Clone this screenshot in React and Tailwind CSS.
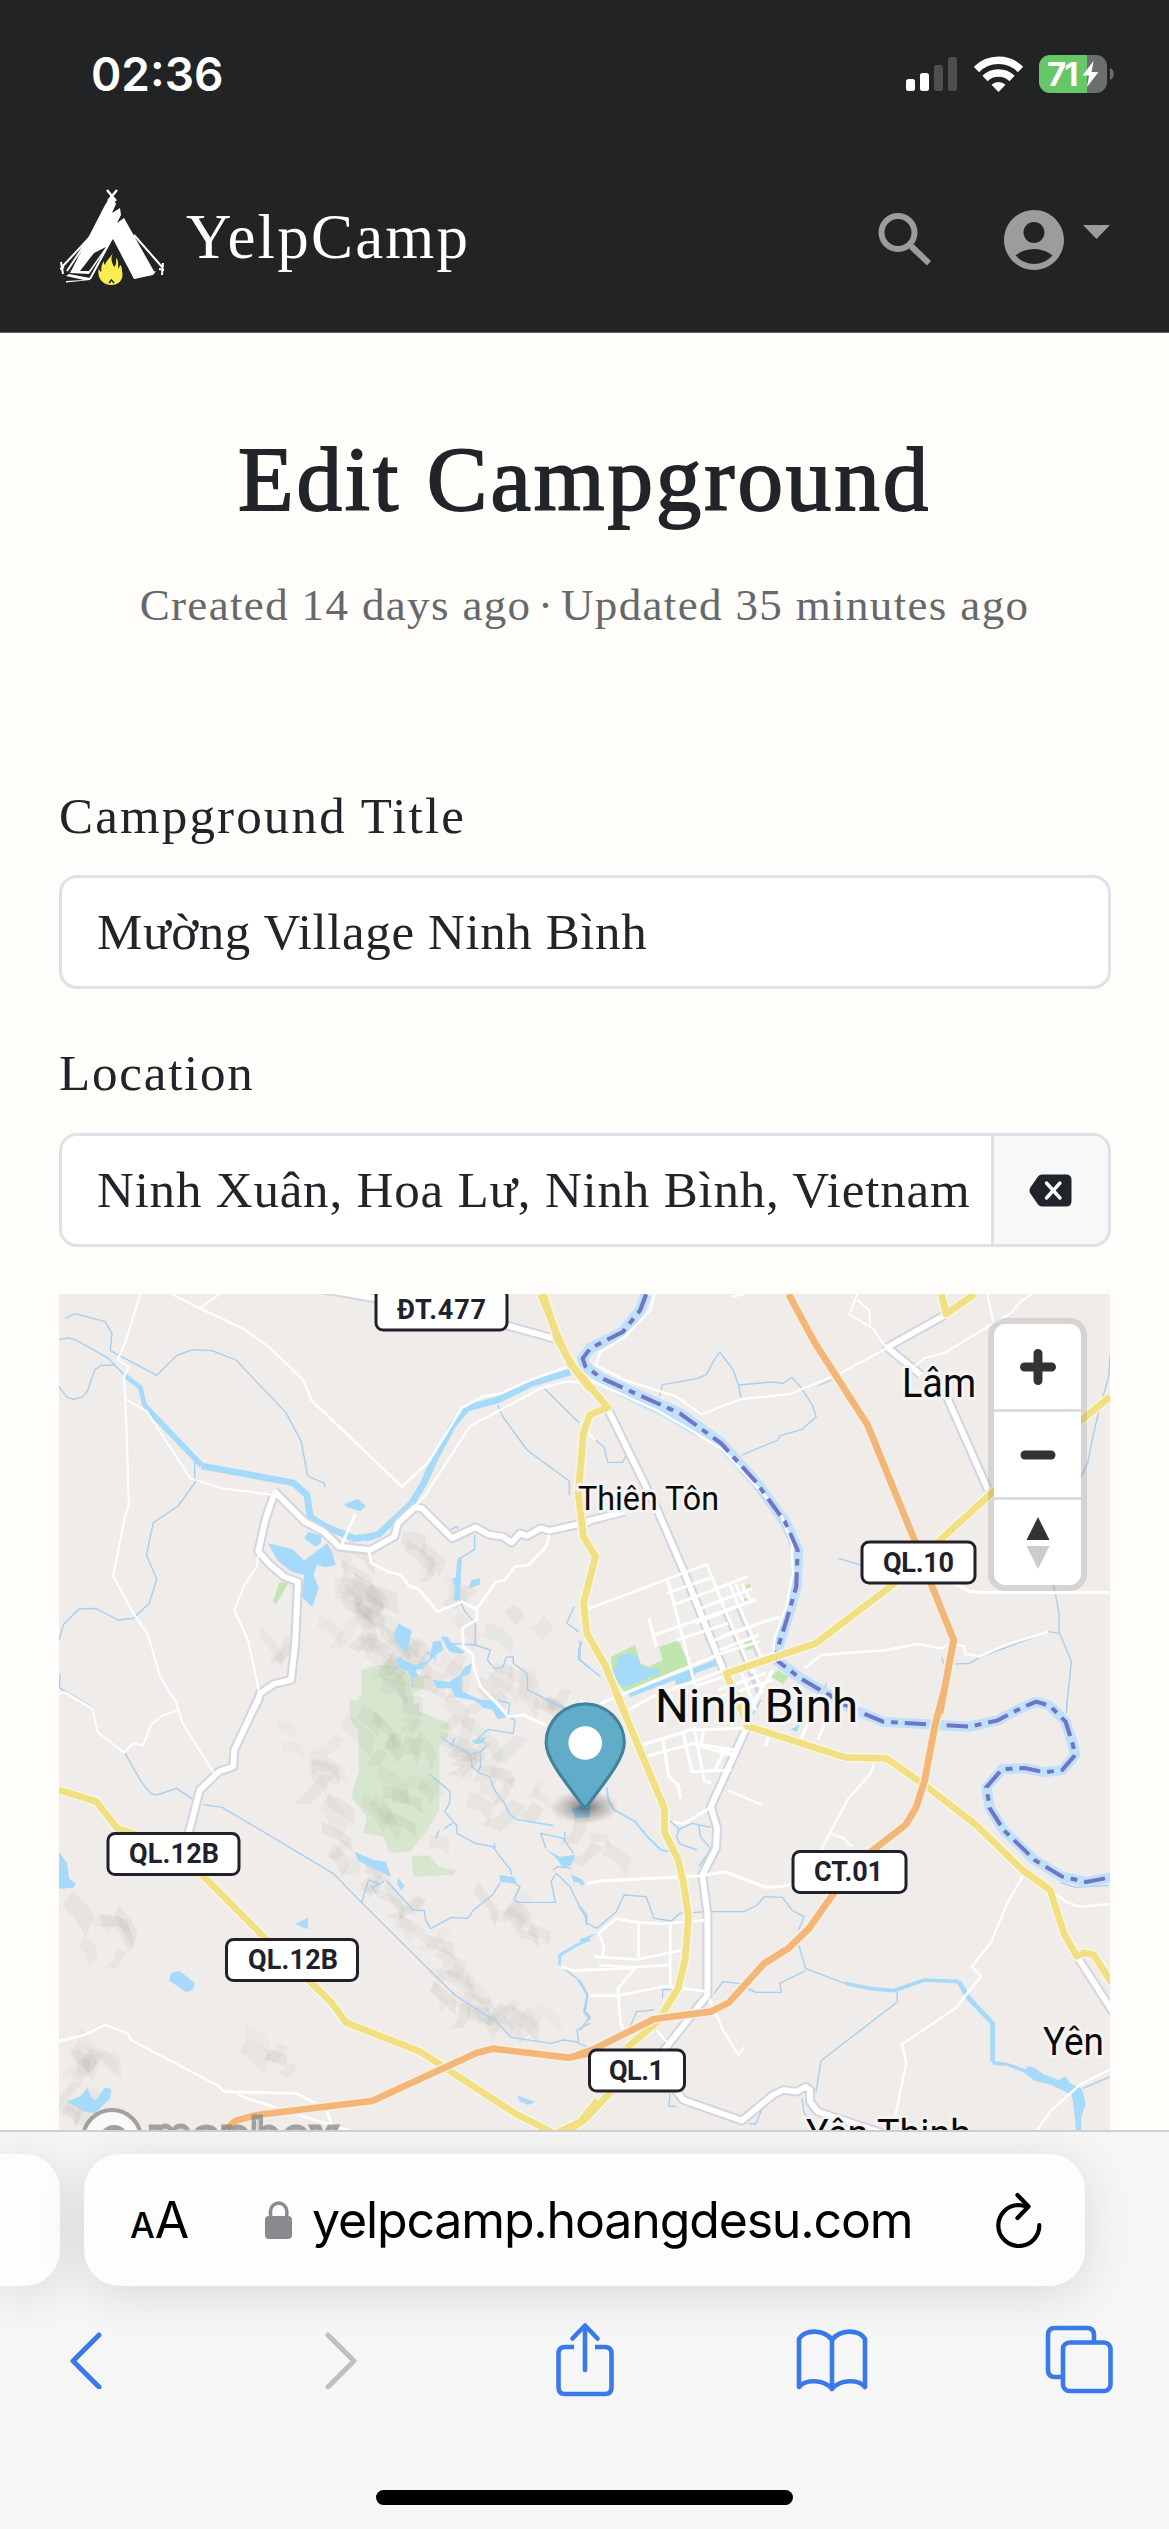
import React from "react";

/* ---------- Map data: four tiles, each with its own local coordinates ---------- */
const TILES = {
  nw: "translate(50 1280) scale(0.34439 0.33333)",
  ne: "translate(580 1280) scale(0.34439 0.33333)",
  sw: "translate(50 1700) scale(0.34439 0.33333)",
  se: "translate(580 1700) scale(0.34439 0.33333)",
};

const PARKS = {
  nw: [
    { d: "M666 908L694 905L657 972L647 967Z", c: "#bfe6af" },
    { d: "M905 1170L955 1155L1000 1158L1050 1185L1088 1190L1085 1225L1055 1240L1055 1300L870 1300L905 1240Z", c: "#d7e6cf" },
  ],
  ne: [
    { d: "M90 1130L160 1095L175 1150L200 1160L240 1140L230 1100L285 1082L318 1155L130 1235L95 1190Z", c: "#bfe6af" },
    { d: "M475 1082L497 1074L505 1104L482 1112Z", c: "#bfe6af" },
    { d: "M480 915L495 911L495 928L482 930Z", c: "#bfe6af" },
    { d: "M555 1190L575 1170L605 1190L590 1212Z", c: "#bfe6af" },
    { d: "M468 960L484 953L484 962L470 967Z", c: "#bfe6af" },
  ],
  sw: [
    { d: "M870 0L1050 0L1075 35L1160 70L1155 110L1130 140L1130 330L1090 400L1045 455L985 458L970 412L910 398L920 350L875 290L897 210L895 90L870 55Z", c: "#d7e6cf" },
    { d: "M1050 468L1100 466L1130 500L1180 510L1170 524L1055 530Z", c: "#d7e6cf" },
  ],
  se: [],
};

const WATER = {
  nw: [
    "M633 790L705 808L738 842L805 790L820 820L830 855L800 862L775 855L765 885L780 925L762 980L730 950L738 885L700 875L660 840Z",
    "M750 755L790 768L786 790L770 800L738 775Z",
    "M854 672L895 657L917 678L902 694L862 682Z",
    "M1012 1030L1050 1052L1035 1120L1012 1095L997 1065Z",
    "M1005 1130L1060 1155L1100 1140L1112 1085L1135 1082L1142 1110L1120 1125L1118 1158L1115 1130L1080 1165L1062 1170L1070 1190L1050 1195L1040 1175L1010 1160Z",
    "M1135 1070L1155 1070L1165 1088L1205 1115L1195 1122L1160 1115Z",
    "M1110 1200L1160 1205L1190 1185L1205 1160L1225 1150L1220 1180L1195 1190L1197 1235L1240 1255L1275 1270L1300 1280L1312 1290L1260 1285L1235 1262L1175 1250L1165 1225L1125 1225Z",
    "M1168 895L1190 890L1190 915L1172 915Z",
    "M1215 925L1225 900L1250 895L1247 915Z",
    "M1183 835L1196 830L1190 960L1172 962Z",
  ],
  ne: [
    "M100 1165L110 1130L140 1118L165 1128L180 1160L228 1168L232 1182L205 1190L160 1210L125 1222L97 1195Z",
    "M140 1240L390 1140L400 1155L335 1180L330 1200L280 1215L275 1200L145 1252Z",
  ],
  sw: [
    "M1238 0L1290 0L1330 50L1300 58L1285 30Z",
    "M1225 122L1265 110L1260 128L1235 133Z",
    "M26 455L50 490L55 535L75 552L68 563L26 566Z",
    "M884 455L940 480L975 485L990 530L968 520L895 482Z",
    "M1012 535L1030 558L1020 572L1008 552Z",
    "M712 672L750 653L748 688Z",
    "M350 820L375 812L420 848L415 870L395 876L347 842Z",
    "M47 1205L90 1188L110 1162L118 1190L132 1202L160 1162L178 1168L175 1195L130 1240L105 1235Z",
    "M1305 525L1350 532L1355 552L1307 545Z",
    "M1440 448L1480 470L1525 465L1515 495L1490 505L1470 475Z",
    "M1512 522L1545 538L1552 552L1520 545Z",
    "M1358 1187L1410 1206L1388 1215L1362 1202Z",
    "M1515 325L1568 310L1568 350L1525 355Z",
  ],
  se: [
    "M0 535L15 555L0 556Z",
    "M0 718L48 700L10 728L0 734Z",
    "M0 312L25 325L25 345L0 352Z",
    "M1195 1082L1240 1088L1295 1108L1300 1098L1320 1103L1345 1122L1390 1140L1410 1128L1422 1150L1455 1165L1462 1180L1468 1215L1455 1250L1455 1292L1440 1292L1437 1250L1428 1185L1370 1155L1320 1142L1290 1118L1240 1098L1200 1095Z",
    "M610 88L628 80L632 60L640 68L630 96Z",
  ],
};

/* Wide and narrow waterways */
const CANALS = {
  nw: [
    { d: "M218 287L262 322L275 378", w: 14 },
    { d: "M275 378L440 556", w: 17 },
    { d: "M440 558L706 608L746 645L756 712L800 740L885 776L940 768", w: 20 },
    { d: "M915 776L955 762L1050 670L1085 610L1120 530L1170 435L1210 385L1300 360L1400 310L1510 276", w: 20 },
  ],
  ne: [],
  sw: [
    { d: "M1568 718L1530 735L1480 765L1480 795", w: 8 },
    { d: "M1335 342L1355 358L1462 377", w: 5 },
  ],
  se: [
    { d: "M78 262L82 300L100 330L160 365L200 415L235 450L260 455", w: 6 },
    { d: "M770 850L840 865L910 872L1000 840L1100 845", w: 11 },
    { d: "M1100 845L1125 890L1198 970L1198 1085", w: 14 },
  ],
};

const STREAMS = {
  nw: [
    "M45 115L72 101L160 125L180 160L175 212L310 286L370 225L415 209L470 212L540 240L685 398L730 485L748 588L797 610L797 622",
    "M26 178L52 174L72 178L170 235L190 258L218 287M26 320L50 352L70 358L95 350L108 335L130 270L146 257L186 255",
    "M420 545L420 590L424 603L372 678L300 728L280 825L310 897L288 970L242 1015L198 1020L132 985L84 987L40 1032L26 1080",
    "M26 1180L30 1195L26 1222L122 1282L125 1300",
    "M1300 375L1315 410L1385 510L1508 604L1508 645M1430 320L1538 430",
    "M1233 765L1233 808L1190 835M1190 960L1205 995L1235 1030L1235 1095L1278 1110L1270 1140L1290 1165L1315 1162L1325 1132L1345 1130L1345 1150L1385 1180L1387 1228L1480 1280L1500 1290",
    "M1522 980L1500 1030L1535 1055M1545 1085L1535 1110L1535 1138L1568 1165",
    "M1165 748L1180 740L1186 748M1235 1180L1250 1220L1300 1275",
    "M1112 1130L1095 1115M1160 1090L1235 1095M1050 1195L1055 1222M1068 1270L1068 1290",
  ],
  ne: [
    "M230 350L240 314L340 296L367 284L392 235L406 217L445 270L460 315L467 352M460 315L560 306L590 310L615 292L640 320L675 376L686 410L645 448L580 467L575 480L470 525",
    "M690 318L730 300M45 480L70 502L80 547L124 547L134 525",
    "M750 835L815 855M1375 915L1391 1000L1391 1055L1427 1145L1412 1290",
    "M1540 225L1535 290L1520 345L1505 400L1487 480L1475 545L1455 592",
    "M1050 1132L1056 1152M1090 1152L1130 1150L1165 1130L1360 1055L1391 1060M640 1180L650 1195L712 1225L715 1210",
    "M0 1082L0 1140L60 1190",
  ],
  sw: [
    "M218 160L265 245L292 280L310 285L367 265L415 298M445 314L500 322L822 520L905 608L1175 885L1300 968L1338 1012L1455 1030L1490 1020L1525 1025L1558 1040",
    "M905 608L925 540L955 552M970 545L935 562L948 580",
    "M975 540L1055 630L1087 632L1090 658L1105 686L1165 652L1213 655L1230 630L1285 585L1307 548",
    "M1350 552L1365 560L1348 595L1357 607L1468 607L1455 545L1470 520L1510 560L1540 625L1555 650L1558 675",
    "M1100 220L1162 275L1160 310L1146 335L1180 375L1182 400L1235 430L1285 440L1337 510L1340 525M1290 430L1292 445M1168 370L1145 385M1130 390L1120 415",
    "M1135 108L1160 130L1222 162L1250 155L1265 140M1165 140L1175 115M1222 162L1225 200L1245 218L1277 230L1290 270L1320 310L1335 345M1250 160L1250 200L1242 215",
    "M1300 0L1335 10L1330 50L1350 60L1345 100L1270 88L1240 120M1440 0L1500 25",
    "M80 0L122 25L135 90",
    "M1440 445L1425 400L1490 415L1520 460M1495 395L1495 418M1460 510L1475 500L1515 505",
    "M1485 800L1530 835L1560 885L1550 935L1568 960M1568 970L1530 990L1535 1025",
  ],
  se: [
    "M262 362L288 388L325 370L380 382M288 388L280 410L290 432L340 450M345 375L350 410L378 445L375 455L345 500",
    "M0 620L20 645L20 670L50 685L105 635L128 585L192 590L215 655L265 663L290 640L370 635L475 635L515 615L535 590L588 592L615 630L650 650L635 690M635 735L655 805L780 855",
    "M655 812L580 850L585 877L510 877L460 850L415 845L390 880",
    "M920 875L922 905L700 1082L685 1175M645 1195L650 1235L670 1275",
    "M262 1180L258 1218L280 1220M490 1270L510 1272L540 1200L590 1180",
    "M0 840L22 885L15 935L30 950L0 990M240 895L240 868L290 870M145 980L165 935L215 930",
    "M1395 548L1440 562L1535 556M1460 1165L1540 1130",
    "M525 0L495 55M1415 0L1412 40",
  ],
};

const MINOR = {
  nw: [
    { d: "M355 43L435 85L560 146L635 200L735 300L760 362L1022 620L1100 545L1195 385L1255 350L1310 340L1400 298L1500 262", w: 7 },
    { d: "M435 85L490 43", w: 7 },
    { d: "M262 43L218 190L196 240L228 260L215 290L222 440L229 675L218 710L183 888L242 1000L285 1065L320 1190L368 1270L375 1300", w: 6 },
    { d: "M220 358L280 393L408 595L500 625L650 645", w: 6 },
    { d: "M1540 308L1500 304L1425 325L1220 438L1090 645L1060 680", w: 7 },
    { d: "M887 700L845 800M925 815L935 850L980 875L1018 885L1045 920L1068 925L1125 995L1195 965L1238 988L1295 905L1320 900L1350 860L1390 855L1440 800L1450 765", w: 8 },
    { d: "M1240 988L1240 1018L1197 1045L1200 1100L1228 1125L1230 1160L1250 1220L1315 1290", w: 8 },
    { d: "M605 820L600 860L565 915L535 990L575 1080L607 1235", w: 6 },
    { d: "M26 1240L45 1238L120 1285", w: 7 },
  ],
  ne: [
    { d: "M215 43L205 90L130 170L60 215L45 255L130 300L280 350L355 405", w: 7 },
    { d: "M30 300L230 395L330 455L415 510L490 595L580 695L615 790L618 880L600 975L565 1075L560 1120", w: 7 },
    { d: "M355 402L465 358L610 342L760 278L890 205L850 145L782 103L805 43M805 60L840 90L842 135", w: 6 },
    { d: "M972 258L1000 235L1060 218L1200 130L1250 100L1280 65L1310 43M1183 43L1200 125", w: 6 },
    { d: "M1085 910L1135 935L1180 938L1540 938", w: 10 },
    { d: "M652 1165L700 1125L890 1110L980 1092L1045 1105L1085 1090L1115 1100L1120 1122L1140 1125L1160 1130L1235 1095L1360 1055", w: 7 },
    { d: "M20 988L368 853L425 1000L500 1180", w: 8 },
    { d: "M440 50L480 43M0 430L45 482", w: 6 },
    { d: "M255 900L345 1260M250 940L390 890M270 975L375 935L485 890M435 915L525 1130M470 910L495 960M452 912L475 968", w: 9 },
    { d: "M350 985L500 925M335 1030L510 958M215 1065L510 960M410 1068L580 1010M200 1015L222 1100M280 1080L430 1030M390 1080L510 1035M405 1110L520 1065", w: 9 },
    { d: "M60 1270L410 1120M140 1290L220 1245L560 1120M330 1220L420 1190M400 1230L540 1180M410 1250L560 1200M470 1180L510 1290M500 1160L530 1240M410 1120L520 1085", w: 9 },
    { d: "M560 1170L515 1250L480 1320", w: 10 },
  ],
  sw: [
    { d: "M365 0L385 70L475 218M370 32L325 48L295 72L270 136L240 130L215 158L138 96L122 25L80 0", w: 6 },
    { d: "M26 1024L100 1005L160 975L225 1000L235 1020L490 1158L505 1175", w: 7 },
    { d: "M505 1175L715 1180L800 1225L825 1292M545 1185L660 1225L870 1292", w: 8 },
    { d: "M1290 0L1330 50L1375 45L1440 75M1485 800L1520 812L1568 810", w: 8 },
    { d: "M1540 0L1560 20", w: 6 },
  ],
  se: [
    { d: "M20 550L60 543L350 527L420 515L540 562L585 560L620 550", w: 9 },
    { d: "M855 190L840 225L780 295L725 400L700 450M725 400L765 415L790 440", w: 7 },
    { d: "M1285 530L1240 610L1192 730L1137 800L1165 828L1090 925L935 1033L947 1090L915 1250", w: 7 },
    { d: "M1370 572L1410 605L1450 620L1540 612M1540 1108L1450 1155L1370 1230L1325 1292", w: 7 },
    { d: "M430 272L530 315M375 895L415 990L460 1065L478 1040M222 990L255 1030", w: 7 },
    { d: "M180 135L320 90L480 85M190 170L330 130L450 150M240 115L258 230L285 255L293 295M300 100L325 215L440 210M330 75L360 240L380 250M395 140L440 160M420 150L390 215M360 85L350 140L440 165", w: 9 },
    { d: "M270 365L300 372L375 325M550 95L540 140M640 125L670 45M690 120L730 30", w: 8 },
    { d: "M370 660L235 672L150 665L105 655L55 700L70 740L65 770M170 665L170 770M262 675L262 860M40 770L165 778L300 750M55 795L150 802L260 795", w: 8 },
    { d: "M0 810L160 805L110 865L118 970L130 1000M30 887L110 887L250 858L370 875", w: 8 },
  ],
};

/* Primary white roads with a lilac casing */
const MAJOR = {
  nw: [
    "M795 30L850 38L950 56M1325 136L1465 176",
    "M650 632L740 725L795 755L840 800L930 810L1000 770L1010 730L1060 682L1080 685L1168 775L1235 742L1275 764L1315 770L1340 788L1365 760L1385 768L1425 745L1450 752L1568 725",
    "M650 645L625 720L605 815L640 855L680 890L720 905L712 1090L700 1200L650 1212L610 1240L605 1260L585 1300",
  ],
  ne: [
    "M80 385L220 680L300 870L420 1180",
    "M15 725L130 695",
    "M1060 105L892 202L990 285M1065 350L1185 630",
  ],
  sw: ["M612 -20L535 150L532 200L490 215L435 270L400 410"],
  se: [
    "M485 80L430 205L380 320L398 385L395 445L355 525L370 640L370 885L235 1062L235 1110L300 1200L470 1262L560 1185L590 1170L630 1175L655 1160L668 1170L668 1205L690 1235L880 1300",
    "M1450 780L1550 940",
  ],
};

const YELLOW = {
  nw: ["M1425 43L1475 170L1510 250L1570 330"],
  ne: [
    "M-110 30L-65 180L-20 260L80 382L28 405L10 460L-5 640L10 770L45 830L10 970L20 1060L75 1160L130 1300",
    "M1050 43L1063 102L1145 43M1540 350L1200 635L1035 790M920 905L685 1090L425 1180L465 1290",
  ],
  sw: [
    "M26 270L135 305L195 385L245 402M435 518L630 720M745 835L815 905L860 968L1075 1055L1350 1240L1430 1282L1460 1300M1470 1300L1540 1265L1590 1200",
  ],
  se: [
    "M105 -20L180 165L245 325L245 395L285 480L300 545L315 650L305 780L285 865L225 965L135 1045M90 1175L15 1258L-30 1290",
    "M455 -20L485 78L770 172L890 175L1000 255L1145 370L1285 510L1365 570L1405 700L1442 768L1465 758L1492 765L1545 850",
  ],
};

const ORANGE = {
  nw: [],
  ne: ["M606 43L680 185L835 435L975 790M1015 900L1085 1080L1045 1300"],
  sw: ["M505 1292L540 1262L600 1245L935 1203L1240 1058L1285 1046L1505 1073L1568 1060"],
  se: ["M1055 -20L1030 80L1000 245L975 325L945 375L845 455M740 575L665 685L605 745L535 790L432 908L380 935L215 957L45 1045L-20 1070"],
};

const RIVER = {
  nw: [],
  ne: [
    { d: "M192 43L175 90L125 155L30 205L8 235L15 258L60 293L160 340L290 400L410 490L510 605L595 725L632 810L628 920L600 1020L572 1110L570 1140L640 1195L780 1280", w: 32 },
  ],
  sw: [],
  se: [
    { d: "M720 -18L780 22L880 65L1030 74L1130 80L1210 62L1285 22L1325 5L1365 18L1410 65L1430 130L1438 165L1400 210L1350 217L1290 204L1225 208L1180 262L1190 325L1230 390L1320 480L1400 530L1470 546L1540 532", w: 30 },
  ],
};

const TILE_KEYS = ["nw", "ne", "sw", "se"];

function Layer({ data, children }) {
  return TILE_KEYS.map((k) => (
    <g key={k} transform={TILES[k]}>
      {data[k].map((item, i) => (
        <React.Fragment key={i}>{children(item)}</React.Fragment>
      ))}
    </g>
  ));
}

/* Relief shading: angular facets scattered along the mountain ridges */
const RIDGES = [
  [[345, 1562], [385, 1610], [400, 1680], 30, 20],
  [[340, 1580], [360, 1640], [410, 1680], 26, 12],
  [[430, 1555], [480, 1610], [530, 1640], 26, 9],
  [[400, 1650], [440, 1670], [480, 1720], 30, 14],
  [[380, 1690], [400, 1760], [420, 1840], 40, 24],
  [[450, 1720], [490, 1770], [530, 1820], 34, 22],
  [[290, 1730], [330, 1780], [325, 1840], 20, 11],
  [[490, 1660], [540, 1690], [570, 1710], 26, 10],
  [[335, 1855], [400, 1910], [470, 2000], 14, 20],
  [[440, 1975], [490, 2020], [550, 2015], 18, 18],
  [[495, 1900], [520, 1920], [540, 1945], 10, 7],
  [[75, 1905], [105, 1935], [120, 1965], 28, 7],
  [[65, 2066], [90, 2072], [110, 2050], 22, 9],
  [[60, 2095], [75, 2110], [70, 2130], 14, 5],
  [[225, 2045], [270, 2050], [305, 2075], 16, 5],
  [[578, 1830], [595, 1845], [605, 1855], 14, 4],
  [[270, 1645], [280, 1655], [290, 1660], 12, 3],
  [[405, 1545], [425, 1555], [440, 1565], 12, 3],
];

function facets() {
  let seed = 11;
  const rnd = () => {
    seed = (seed * 16807) % 2147483647;
    return seed / 2147483647;
  };
  const out = [];
  RIDGES.forEach(([a, b, c, spread, count]) => {
    for (let i = 0; i < count; i++) {
      const t = (i + rnd()) / count;
      const [p, q, u] = t < 0.5 ? [a, b, t * 2] : [b, c, t * 2 - 1];
      const x = p[0] + (q[0] - p[0]) * u + (rnd() - 0.5) * 2 * spread;
      const y = p[1] + (q[1] - p[1]) * u + (rnd() - 0.5) * spread;
      const ang = rnd() < 0.65 ? 0.75 + (rnd() - 0.5) * 0.9 : 2.3 + (rnd() - 0.5) * 0.8;
      const len = 16 + rnd() * 26;
      const w = 7 + rnd() * 8;
      const at = (f, s) => [
        (x + Math.cos(ang) * len * f - Math.sin(ang) * w * s).toFixed(1),
        (y + Math.sin(ang) * len * f + Math.cos(ang) * w * s).toFixed(1),
      ];
      const pts = [at(-0.6, -0.3), at(-0.1, -0.5 - rnd() * 0.3), at(0.3, -0.7), at(0.6, 0.5), at(0.1, 0.1 + rnd() * 0.5), at(-0.4, 0.7)];
      out.push({ d: "M" + pts.map((v) => v.join(" ")).join("L") + "Z", o: 0.035 + rnd() * 0.045 });
    }
  });
  return out;
}
const FACETS = facets();

const SHIELDS = [
  { t: "ĐT.477", x: 376, y: 1289, w: 131, tx: 397, tw: 89 },
  { t: "QL.10", x: 862, y: 1542, w: 113, tx: 883, tw: 71 },
  { t: "QL.12B", x: 108, y: 1833.5, w: 131, tx: 129, tw: 90 },
  { t: "QL.12B", x: 226.5, y: 1939.5, w: 131, tx: 248, tw: 90 },
  { t: "CT.01", x: 793, y: 1851.5, w: 113, tx: 814, tw: 69 },
  { t: "QL.1", x: 589.5, y: 2050, w: 95, tx: 609, tw: 55 },
];

const PLACES = [
  { t: "Lâm", x: 902, y: 1397, s: 40, w: 74 },
  { t: "Thiên Tôn", x: 578, y: 1510, s: 33.5, w: 141 },
  { t: "Ninh Bình", x: 655, y: 1722, s: 46, w: 203 },
  { t: "Yên", x: 1043, y: 2055, s: 39, w: 61 },
  { t: "Yên Thịnh", x: 806, y: 2147, s: 38, w: 165 },
];

const stroke = { fill: "none", strokeLinejoin: "round" };

function MapCanvas() {
  return (
    <svg viewBox="59 1294 1051 836" width="1051" height="836" className="block">
      <rect x="59" y="1294" width="1051" height="836" fill="#efecea" />
      <Layer data={PARKS}>{(p) => <path d={p.d} fill={p.c} />}</Layer>
      {FACETS.map((f, i) => (
        <path key={i} d={f.d} fill="#7d7561" opacity={f.o} />
      ))}
      <Layer data={STREAMS}>{(d) => <path d={d} {...stroke} stroke="#a6cff2" strokeWidth="4" />}</Layer>
      <Layer data={CANALS}>{(c) => <path d={c.d} {...stroke} stroke="#a6dafa" strokeWidth={c.w} />}</Layer>
      <Layer data={WATER}>{(d) => <path d={d} fill="#a6dafa" />}</Layer>
      <Layer data={RIVER}>{(r) => <path d={r.d} {...stroke} stroke="#bfe1fb" strokeWidth={r.w} />}</Layer>
      <g transform={TILES.ne}>
        <path d="M40 285L200 345L330 430L340 470L240 410L110 345Z" fill="#bfe1fb" />
      </g>
      <g transform={TILES.ne} {...stroke}>
        <path d="M415 985L520 1240M455 975L520 1130" stroke="#d3d5e0" strokeWidth="14" />
      </g>
      <Layer data={MAJOR}>{(d) => <path d={d} {...stroke} stroke="#d3d5e0" strokeWidth="29" />}</Layer>
      <Layer data={MINOR}>{(m) => <path d={m.d} {...stroke} stroke="#fff" strokeWidth={m.w} />}</Layer>
      <Layer data={MAJOR}>{(d) => <path d={d} {...stroke} stroke="#fff" strokeWidth="17" />}</Layer>
      <Layer data={RIVER}>
        {(r) => <path d={r.d} {...stroke} stroke="#7375c4" strokeWidth="12" strokeDasharray="62 20 20 20" />}
      </Layer>
      <Layer data={YELLOW}>{(d) => <path d={d} {...stroke} stroke="#fbf6e2" strokeWidth="29" />}</Layer>
      <Layer data={YELLOW}>{(d) => <path d={d} {...stroke} stroke="#f1df84" strokeWidth="20" />}</Layer>
      <Layer data={ORANGE}>{(d) => <path d={d} {...stroke} stroke="#fbf0e0" strokeWidth="28" />}</Layer>
      <Layer data={ORANGE}>{(d) => <path d={d} {...stroke} stroke="#f2b679" strokeWidth="20" />}</Layer>

      {PLACES.map((p) => (
        <text
          key={p.t}
          x={p.x}
          y={p.y}
          fontSize={p.s}
          textLength={p.w}
          lengthAdjust="spacingAndGlyphs"
          fontFamily="Roboto, sans-serif"
          fill="#0a0a0a"
          stroke="#f5f3f1"
          strokeWidth="6"
          strokeLinejoin="round"
          paintOrder="stroke"
        >
          {p.t}
        </text>
      ))}

      {SHIELDS.map((s, i) => (
        <g key={i}>
          <rect x={s.x} y={s.y} width={s.w} height="41" rx="7" fill="#fff" stroke="#20212b" strokeWidth="3" />
          <text
            x={s.tx}
            y={s.y + 29.5}
            fontSize="27"
            fontWeight="700"
            textLength={s.tw}
            fontFamily="Roboto, sans-serif"
            fill="#20212b"
          >
            {s.t}
          </text>
        </g>
      ))}

      {/* Attribution logo */}
      <g opacity="0.75">
        <circle cx="112" cy="2139" r="29" fill="#fff" stroke="#8a8886" strokeWidth="4" />
        <circle cx="114" cy="2140" r="15" fill="#8a8886" />
        <circle cx="115" cy="2137" r="4.5" fill="#fff" />
        <text
          x="148"
          y="2158"
          fontSize="56"
          fontWeight="700"
          textLength="190"
          lengthAdjust="spacingAndGlyphs"
          fontFamily="Inter, sans-serif"
          fill="#d9d7d5"
          stroke="#8a8886"
          strokeWidth="5"
        >
          mapbox
        </text>
      </g>

      {/* Marker */}
      <defs>
        <radialGradient id="pinShadow">
          <stop offset="0" stopColor="#000" stopOpacity="0.5" />
          <stop offset="0.5" stopColor="#000" stopOpacity="0.22" />
          <stop offset="1" stopColor="#000" stopOpacity="0" />
        </radialGradient>
      </defs>
      <ellipse cx="585" cy="1807" rx="34" ry="17" fill="url(#pinShadow)" />
      <g transform="translate(544.7 1702.5) scale(3)">
        <path
          d="M27 13.5C27 19.07 20.25 27 14.75 34.5C14.02 35.5 12.98 35.5 12.25 34.5C6.75 27 0 19.22 0 13.5C0 6.04 6.04 0 13.5 0C20.96 0 27 6.04 27 13.5Z"
          fill="#61adc9"
        />
        <path
          d="M26.5 13.5C26.5 18.9 19.9 26.6 14.35 34.2C13.8 34.9 13.2 34.9 12.65 34.2C7.1 26.6 .5 19 .5 13.5C.5 6.3 6.3 .5 13.5 .5C20.7 .5 26.5 6.3 26.5 13.5Z"
          fill="none"
          stroke="#438299"
          strokeWidth="1"
        />
        <circle cx="13.5" cy="13.5" r="5.6" fill="#fff" />
      </g>
    </svg>
  );
}

function StatusBar() {
  return (
    <div className="flex h-[148px] items-center justify-between pr-[54px] pl-[91px]">
      <span className="font-['Inter',sans-serif] text-[46px] leading-none font-semibold tracking-[0px] text-white">02:36</span>
      <div className="flex items-center">
        <svg width="52" height="36" viewBox="0 0 52 36" className="mr-4">
          <rect x="0" y="23" width="9" height="12" rx="2.5" fill="#fff" />
          <rect x="14" y="17" width="9" height="18" rx="2.5" fill="#fff" />
          <rect x="28" y="9" width="9" height="26" rx="2.5" fill="#4e4f51" />
          <rect x="42" y="1" width="9" height="34" rx="2.5" fill="#4e4f51" />
        </svg>
        <svg width="49" height="37" viewBox="0 0 49 37" className="mr-4">
          <g fill="none" stroke="#fff" strokeWidth="7.5">
            <path d="M2.5 13.5A31 31 0 0 1 46.500 13.5" />
            <path d="M11 22.500A19.500 19.500 0 0 1 38 22.500" />
          </g>
          <path d="M24.500 36L17.500 28.800A10 10 0 0 1 31.500 28.800Z" fill="#fff" />
        </svg>
        <div className="relative flex h-[38px] w-[68px] items-center overflow-hidden rounded-[11px] bg-[linear-gradient(90deg,#67c667_70%,#6c6d6f_70%)]">
          <span className="ml-[8px] font-['Inter',sans-serif] text-[33px] leading-none font-bold tracking-[-2px] text-white">71</span>
          <svg width="17" height="26" viewBox="0 0 17 26" className="absolute top-[6px] left-[43px]">
            <path d="M11.500 0L0.500 14.500H7L5 26L16.500 11H9.500Z" fill="#fff" />
          </svg>
        </div>
        <svg width="5" height="12" viewBox="0 0 5 12" className="ml-[3px]">
          <path d="M0 0A6 6.500 0 0 1 0 12Z" fill="#6c6d6f" />
        </svg>
      </div>
    </div>
  );
}

function TentLogo() {
  return (
    <svg width="106" height="108" viewBox="0 0 106 108">
      <g fill="#fff">
        <path d="M51.500 8L56 17L52 26L60 21L61 28L57 36L64 31L95 86L74 92L53 52L29 87L10 86L45 18Z" />
        <path d="M47 3L56 14M57 3L48 14" stroke="#fff" strokeWidth="2.500" />
        <path d="M30 91L9 87L6 89L24 93L6 94L6 95.500L30 93Z" />
        <path d="M74 90L96 84L93 88L74 92Z" />
      </g>
      <g fill="none" stroke="#fff" strokeWidth="2">
        <path d="M30 50L2 80M1 75L3 87M0 82L4 80M74 48L103 81M103 76L102 88M99 82L104 83" />
        <path d="M50 55L30 92M27 54L7 84" />
      </g>
      <path d="M46 60L29 84L20 84L34 66Z" fill="#222325" />
      <path
        d="M53 66C50 71 46 74 45 78C44 77 44 76 44 74C40 79 42 83 41 85C40 84 39 83 39 81C36 92 44 98 51 98C60 98 64 92 62 84C62 81 61 79 61 78C59 79 59 81 58 82C58 77 59 74 56 71C56 75 57 77 54 80C52 75 50 72 53 66Z"
        fill="#f9ee4f"
      />
      <path d="M49 96L51.500 93L54 96" fill="none" stroke="#222325" strokeWidth="1.500" />
    </svg>
  );
}

function Navbar() {
  return (
    <div className="flex h-[184px] items-start pr-[59px] pl-[60px]">
      <div className="mt-[39px]">
        <TentLogo />
      </div>
      <span className="mt-[53px] ml-[20px] font-['Liberation_Serif',serif] text-[63px] leading-[72px] tracking-[2.2px] text-white">
        YelpCamp
      </span>
      <svg width="54" height="54" viewBox="0 0 54 54" className="mt-[64px] ml-auto">
        <circle cx="20" cy="20.500" r="16.500" fill="none" stroke="#9b9c9e" strokeWidth="6" />
        <path d="M31.500 32.500L36 32.500L53 49L49 53.500L31.500 37Z" fill="#9b9c9e" />
      </svg>
      <svg width="60" height="60" viewBox="2 2 20 20" className="mt-[62px] ml-[72px]">
        <path
          fill="#9b9c9e"
          d="M12 2C6.480 2 2 6.480 2 12s4.480 10 10 10 10-4.480 10-10S17.520 2 12 2zm0 4c1.930 0 3.500 1.570 3.500 3.500S13.930 13 12 13s-3.500-1.570-3.500-3.500S10.070 6 12 6zm0 14c-2.030 0-4.430-.820-6.140-2.880C7.550 15.800 9.680 15 12 15s4.450.800 6.140 2.120C16.430 19.180 14.030 20 12 20z"
        />
      </svg>
      <svg width="27" height="14" viewBox="0 0 27 14" className="mt-[77px] ml-[19px]">
        <path d="M0 0H27L13.500 14Z" fill="#9b9c9e" />
      </svg>
    </div>
  );
}

function MapControls() {
  return (
    <div className="absolute top-[24px] right-[23px] flex w-[99px] flex-col rounded-[17px] border-[6px] border-black/10 bg-clip-padding">
      <div className="flex flex-col divide-y-[3px] divide-[#ddd] overflow-hidden rounded-[12px] bg-white">
        <button className="flex h-[88px] items-center justify-center">
          <svg width="36" height="36" viewBox="0 0 36 36">
            <path d="M18 4.500V31.500M4.500 18H31.500" stroke="#333" strokeWidth="9" strokeLinecap="round" />
          </svg>
        </button>
        <button className="flex h-[88px] items-center justify-center">
          <svg width="36" height="36" viewBox="0 0 36 36">
            <path d="M5 18H31" stroke="#333" strokeWidth="9" strokeLinecap="round" />
          </svg>
        </button>
        <button className="flex h-[85px] items-center justify-center">
          <svg width="24" height="52" viewBox="0 0 24 52">
            <path d="M12 0L23.500 23H0.500Z" fill="#333" />
            <path d="M0.500 29H23.500L12 52Z" fill="#ccc" />
          </svg>
        </button>
      </div>
    </div>
  );
}

function BrowserBar() {
  return (
    <div className="h-[399px] border-t-2 border-[#d2d1d1] bg-[#f7f6f7]">
      <div className="mt-[22px] flex h-[132px] gap-[24px]">
        <div className="w-[60px] rounded-r-[36px] bg-[#fdfdfd] shadow-[0_8px_50px_rgba(0,0,0,0.12)]" />
        <div className="flex w-[1001px] items-center rounded-[36px] bg-[#fdfdfd] pr-[43px] pl-[46px] font-['Inter',sans-serif] text-black shadow-[0_8px_50px_rgba(0,0,0,0.12)]">
          <span className="flex h-[62px] w-[62px] items-baseline leading-[62px]">
            <span className="text-[35px] font-medium">A</span>
            <span className="text-[50px]">A</span>
          </span>
          <svg width="28" height="40" viewBox="0 0 28 40" className="ml-[73px]">
            <rect x="0" y="16" width="27" height="23" rx="4" fill="#8a8a8e" />
            <path d="M5.500 18V11A8.200 9 0 0 1 21.800 11V18" fill="none" stroke="#8a8a8e" strokeWidth="3.500" />
          </svg>
          <span className="ml-[19px] text-[50px] leading-[62px] tracking-[-1.15px]">yelpcamp.hoangdesu.com</span>
          <svg width="46" height="56" viewBox="0 0 46 56" className="ml-auto">
            <g fill="none" stroke="#000" strokeWidth="4.200" strokeLinecap="round" strokeLinejoin="round">
              <path d="M32 14.500L23 13A20.500 20.500 0 1 0 43.300 33" />
              <path d="M21.500 3L32.500 14.500L21.500 26" />
            </g>
          </svg>
        </div>
      </div>
      <div className="mt-[34px] flex h-[80px] items-center pl-[69px]">
        <svg width="34" height="58" viewBox="0 0 34 58">
          <path d="M30 4L4 30L30 56" fill="none" stroke="#3a79e8" strokeWidth="5" strokeLinecap="round" strokeLinejoin="round" />
        </svg>
        <svg width="34" height="58" viewBox="0 0 34 58" className="ml-[221px]">
          <path d="M4 4L30 30L4 56" fill="none" stroke="#c1c0c1" strokeWidth="5" strokeLinecap="round" strokeLinejoin="round" />
        </svg>
        <svg width="60" height="76" viewBox="0 0 60 76" className="ml-[197px]">
          <g fill="none" stroke="#3a79e8" strokeWidth="4.600" strokeLinecap="round" strokeLinejoin="round">
            <path d="M19 25H10Q3.500 25 3.500 31.500V65.500Q3.500 72 10 72H50Q56.500 72 56.500 65.500V31.500Q56.500 25 50 25H40" strokeLinecap="butt" />
            <path d="M30 48V4M17.500 16.500L30 3.500L42.500 16.500" />
          </g>
        </svg>
        <svg width="72" height="66" viewBox="0 0 72 66" className="ml-[181px]">
          <g fill="none" stroke="#3a79e8" strokeWidth="4.600" strokeLinejoin="round">
            <path d="M36 13C28 2 9 2 3 12V60C9 52 28 52 36 62C44 52 63 52 69 60V12C63 2 44 2 36 13ZM36 13V62" />
          </g>
        </svg>
        <svg width="68" height="70" viewBox="0 0 68 70" className="ml-[177px]">
          <g fill="none" stroke="#3a79e8" strokeWidth="4.600">
            <path d="M17 52H10Q3 52 3 45V10Q3 3 10 3H42Q49 3 49 10V17" />
            <rect x="18" y="17.500" width="47.500" height="48.500" rx="6.500" />
          </g>
        </svg>
      </div>
      <div className="mx-auto mt-[90px] h-[15px] w-[417px] rounded-full bg-black" />
    </div>
  );
}

export default function App() {
  return (
    <div className="flex h-[2529px] w-[1169px] flex-col overflow-hidden bg-[#fefdf9] font-['Liberation_Serif',serif] text-[#212529]">
      <header className="h-[333px] border-b border-[#6b6266] bg-[#222325]">
        <StatusBar />
        <Navbar />
      </header>

      <main className="h-[1797px] overflow-hidden px-[59px] pt-[92px]">
        <h1 className="h-[110px] text-center text-[91px] leading-[110px] tracking-[2.9px] whitespace-nowrap [-webkit-text-stroke:1.8px_#212529]">
          Edit Campground
        </h1>
        <p className="mt-[40px] h-[60px] text-center text-[45px] leading-[60px] tracking-[1.35px] whitespace-nowrap text-[#66686b]">
          Created 14 days ago<span className="mx-[-6px]"> · </span>Updated 35 minutes ago
        </p>

        <div className="mt-[145px]">
          <label className="block h-[72px] text-[51px] leading-[72px] tracking-[2.15px]">Campground Title</label>
          <div className="mt-[23px] flex h-[114px] w-[1052px] items-center rounded-[18px] border-[3px] border-[#dee2e6] bg-white pl-[35px] text-[51px] tracking-[0.6px] whitespace-nowrap">
            Mường Village Ninh Bình
          </div>
        </div>

        <div className="mt-[48px]">
          <label className="block h-[72px] text-[51px] leading-[72px] tracking-[1.8px]">Location</label>
          <div className="mt-[24px] flex h-[114px] w-[1052px] overflow-hidden rounded-[18px] border-[3px] border-[#dee2e6] bg-white">
            <div className="flex w-[932px] items-center border-r-[3px] border-[#dee2e6] pl-[35px] text-[51px] tracking-[0.8px] whitespace-nowrap">
              Ninh Xuân, Hoa Lư, Ninh Bình, Vietnam
            </div>
            <div className="flex flex-1 items-center justify-center bg-[#f8f8f9] pr-[2px]">
              <svg width="43" height="33" viewBox="0 0 43 33">
                <path d="M13 0.500H37Q42.500 0.500 42.500 6V27Q42.500 32.500 37 32.500H13Q10.500 32.500 9 30.500L1 19Q0 16.500 1 14L9 2.500Q10.500 0.500 13 0.500Z" fill="#212529" />
                <path d="M17.500 9L31 24M31 9L17.500 24" stroke="#fff" strokeWidth="3.400" strokeLinecap="round" />
              </svg>
            </div>
          </div>
        </div>

        <div className="relative mt-[47px] h-[836px] overflow-hidden">
          <MapCanvas />
          <MapControls />
        </div>
      </main>

      <BrowserBar />
    </div>
  );
}
